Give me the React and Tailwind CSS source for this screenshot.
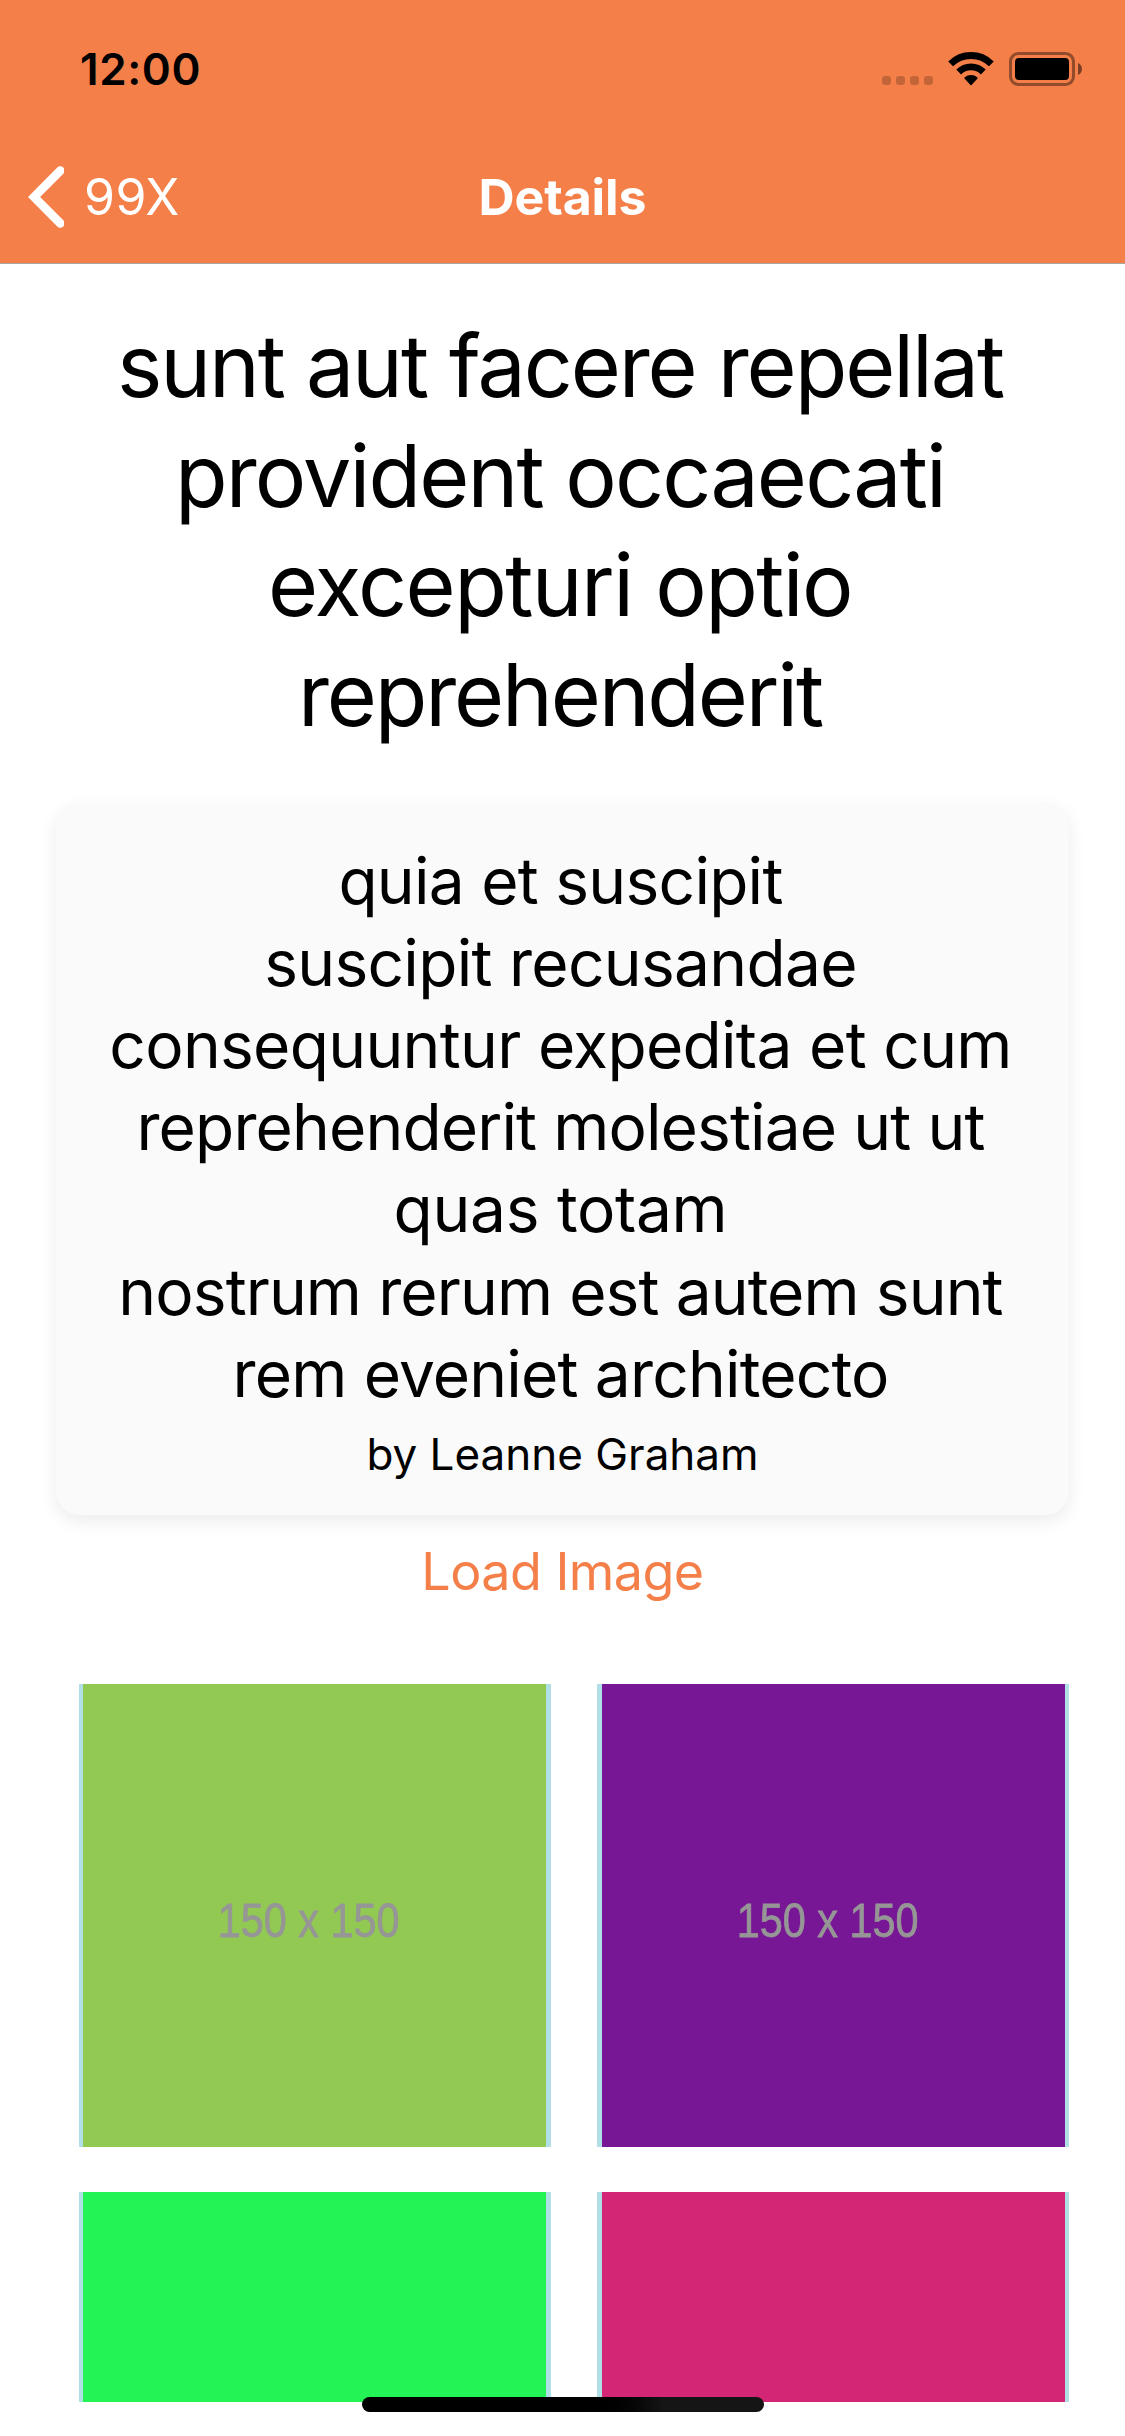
const titleLines = [
  { text: 'sunt aut facere repellat', spacing: 'tracking-[-2.087px]' },
  { text: 'provident occaecati', spacing: 'tracking-[-1.827px]' },
  { text: 'excepturi optio', spacing: 'tracking-[-1.561px]' },
  { text: 'reprehenderit', spacing: 'tracking-[-2.165px]' },
];

const bodyLines = [
  { text: 'quia et suscipit', spacing: 'tracking-[-0.725px]' },
  { text: 'suscipit recusandae', spacing: 'tracking-[-0.694px]' },
  { text: 'consequuntur expedita et cum', spacing: 'tracking-[-0.676px]' },
  { text: 'reprehenderit molestiae ut ut', spacing: 'tracking-[-0.865px]' },
  { text: 'quas totam', spacing: 'tracking-[-0.292px]' },
  { text: 'nostrum rerum est autem sunt', spacing: 'tracking-[-0.885px]' },
  { text: 'rem eveniet architecto', spacing: 'tracking-[-0.807px]' },
];

const tiles = [
  { color: 'bg-[#92c952]', edge: 'h-[463px] pl-1 pr-[5px]', label: '150 x 150' },
  { color: 'bg-[#771796]', edge: 'h-[463px] pl-[5px] pr-1', label: '150 x 150' },
  { color: 'bg-[#24f355]', edge: 'h-[210px] pl-1 pr-[5px]' },
  { color: 'bg-[#d32776]', edge: 'h-[210px] pl-[5px] pr-1' },
];

function Wifi() {
  return (
    <svg width="46" height="34" viewBox="0 0 46 34" fill="none" stroke="#000" strokeWidth="6.8">
      <path d="M2.64 11.94A28.8 28.8 0 0 1 43.36 11.94" />
      <path d="M10.7 20A17.4 17.4 0 0 1 35.3 20" />
      <path
        d="M23 32.6L17 26.1A9 9 0 0 1 29 26.1Z"
        fill="#000"
        strokeWidth="1.4"
        strokeLinejoin="round"
      />
    </svg>
  );
}

function Battery() {
  return (
    <svg width="74" height="34" viewBox="0 0 74 34">
      <rect x="1.5" y="1.5" width="63" height="31" rx="8" fill="none" stroke="#000" strokeOpacity="0.4" strokeWidth="3" />
      <rect x="6" y="6" width="54" height="22" rx="4" />
      <path d="M69 11C74.3 13 74.3 21 69 23Z" fillOpacity="0.5" />
    </svg>
  );
}

function StatusBar() {
  return (
    <div className="flex h-[132px] items-start justify-between pl-[80px] pr-[42px]">
      <span className="pt-[42px] text-[44px] leading-[54px] font-semibold tracking-[0.6px]">12:00</span>
      <div className="flex items-start pt-[52px]">
        <div className="mr-[15px] flex gap-[5px] pt-6">
          {[0, 1, 2, 3].map((i) => (
            <span key={i} className="size-[9px] rounded-[3px] bg-black/20" />
          ))}
        </div>
        <div className="mr-[15px]">
          <Wifi />
        </div>
        <Battery />
      </div>
    </div>
  );
}

function NavBar() {
  return (
    <div className="grid h-[131px] grid-cols-3 items-center pb-[1px] text-[50px] leading-[62px] text-white">
      <div className="flex items-center pl-[28px]">
        <svg width="36" height="64" viewBox="0 0 36 64" fill="none" stroke="#fff" strokeWidth="8.6" strokeLinecap="round">
          <path d="M32.3 5.6L6.1 32L32.3 58.4" />
        </svg>
        <span className="pl-5 font-normal tracking-[0.5px]">99X</span>
      </div>
      <span className="text-center font-bold tracking-[-0.1px]">Details</span>
    </div>
  );
}

export default function App() {
  return (
    <div className="relative flex h-[2436px] w-[1125px] flex-col overflow-hidden bg-white font-[Inter,sans-serif] text-black">
      <header className="h-[264px] shrink-0 border-b border-[#a9a5a3] bg-[#f47f48]">
        <StatusBar />
        <NavBar />
      </header>

      <h1 className="mt-[48px] pr-[5px] text-center text-[86px] leading-[109.5px]">
        {titleLines.map((l) => (
          <span key={l.text} className={`block whitespace-nowrap ${l.spacing}`}>
            {l.text}
          </span>
        ))}
      </h1>

      <section className="mx-[56px] mt-[53px] h-[712px] shrink-0 rounded-[24px] bg-[#fafafa] pt-[36.5px] text-center shadow-[0_6px_18px_rgba(0,0,0,0.08)]">
        <p className="pr-1 text-[64px] leading-[82.2px]">
          {bodyLines.map((l) => (
            <span key={l.text} className={`block whitespace-nowrap ${l.spacing}`}>
              {l.text}
            </span>
          ))}
        </p>
        <p className="mt-[12px] text-[44px] leading-[54px]">by Leanne Graham</p>
      </section>

      <button className="mt-[25px] self-center text-[52px] leading-[64px] tracking-[-0.54px] text-[#f47f48]">
        Load Image
      </button>

      <div className="mt-[80px] grid shrink-0 grid-cols-[472px_472px] content-start gap-x-[46px] gap-y-[45px] pl-[79px]">
        {tiles.map((t) => (
          <div key={t.color} className={`bg-[#b0e0e6] ${t.edge}`}>
            <div className={`flex h-full justify-center pr-[11px] ${t.color}`}>
              {t.label && (
                <span className="mt-[211px] inline-block h-[50px] scale-x-[0.845] font-['Liberation_Sans',sans-serif] text-[49px] leading-[50px] whitespace-nowrap text-[#969696] blur-[0.7px] [-webkit-text-stroke:0.8px_#969696]">
                  {t.label}
                </span>
              )}
            </div>
          </div>
        ))}
      </div>

      <div className="absolute bottom-6 left-[362px] h-[15px] w-[402px] rounded-full bg-linear-to-r from-black from-55% to-[#151515] to-75%" />
    </div>
  );
}
